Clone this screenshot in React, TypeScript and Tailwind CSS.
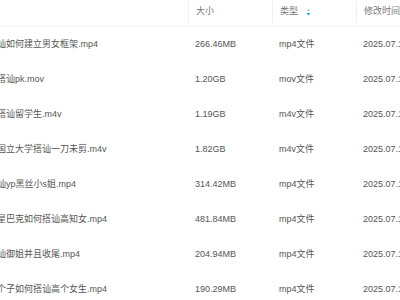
import React from "react";

type Row = { name: string; size: string; type: string; date: string };

const rows: Row[] = [
  { name: "讪如何建立男女框架.mp4", size: "266.46MB", type: "mp4文件", date: "2025.07.1" },
  { name: "搭讪pk.mov", size: "1.20GB", type: "mov文件", date: "2025.07.1" },
  { name: "搭讪留学生.m4v", size: "1.19GB", type: "m4v文件", date: "2025.07.1" },
  { name: "国立大学搭讪一刀未剪.m4v", size: "1.82GB", type: "m4v文件", date: "2025.07.1" },
  { name: "讪yp黑丝小s姐.mp4", size: "314.42MB", type: "mp4文件", date: "2025.07.1" },
  { name: "星巴克如何搭讪高知女.mp4", size: "481.84MB", type: "mp4文件", date: "2025.07.1" },
  { name: "讪御姐并且收尾.mp4", size: "204.94MB", type: "mp4文件", date: "2025.07.1" },
  { name: "个子如何搭讪高个女生.mp4", size: "190.29MB", type: "mp4文件", date: "2025.07.1" },
];

function SortIcon() {
  return (
    <svg width="5" height="8" viewBox="0 0 5 8" className="ml-[8px]">
      <path d="M2.5 0.5 L4.5 3 L0.5 3 Z" fill="#c4d2e6" />
      <path d="M2.5 7.5 L4.5 5 L0.5 5 Z" fill="#06a7ff" />
    </svg>
  );
}

export default function App() {
  return (
    <div
      className="w-[400px] h-[300px] overflow-hidden bg-white text-[9px] text-[#555]"
      style={{ fontFamily: '"Liberation Sans", "Noto Sans CJK SC", sans-serif' }}
    >
      {/* header */}
      <div className="flex h-[27px] border-b border-[#f1f2f4] text-[#777]">
        <div className="w-[188px] shrink-0" />
        <div className="w-[84px] shrink-0 flex items-center pl-[7px] border-l border-[#eef0f3] mb-[2px]">
          大小
        </div>
        <div className="w-[84px] shrink-0 flex items-center pl-[7px] border-l border-[#eef0f3] mb-[2px]">
          类型
          <SortIcon />
        </div>
        <div className="flex-1 flex items-center pl-[7px] border-l border-[#eef0f3] mb-[2px] whitespace-nowrap">
          修改时间
        </div>
      </div>

      {/* rows */}
      {rows.map((r, i) => (
        <div key={i} className="flex h-[35px] items-center whitespace-nowrap">
          <div className="w-[188px] shrink-0 overflow-hidden">
            <span className="block -ml-[3px]">{r.name}</span>
          </div>
          <div className="w-[84px] shrink-0 pl-[7px]">{r.size}</div>
          <div className="w-[84px] shrink-0 pl-[7px]">{r.type}</div>
          <div className="flex-1 pl-[7px] overflow-hidden">{r.date}</div>
        </div>
      ))}
    </div>
  );
}
